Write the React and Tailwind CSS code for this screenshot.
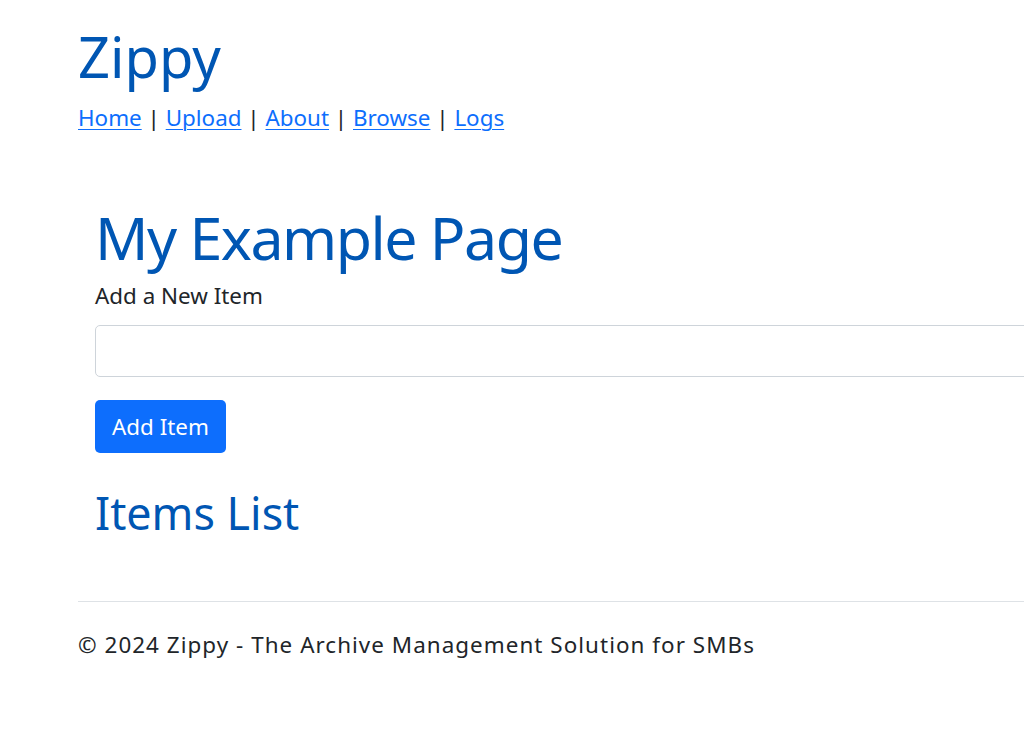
export default function App() {
  const links = ["Home", "Upload", "About", "Browse", "Logs"];
  return (
    <div className="w-[1024px] min-h-[754px] overflow-hidden bg-white text-[#212529] font-['Noto_Sans',sans-serif]">
      <div className="pl-[78px] w-[1300px]">
        <header className="pt-[23px]">
          <h1 className="text-[56px] leading-[1.2] text-[#0056b3] font-normal">Zippy</h1>
          <nav className="mt-[10.5px] text-[22.4px] leading-[1.5]">
            {links.map((l, i) => (
              <span key={l}>
                <a href="#" className="text-[#0d6efd] underline underline-offset-[3px] decoration-1">
                  {l}
                </a>
                {i < links.length - 1 && <span> | </span>}
              </span>
            ))}
          </nav>
        </header>
        <main className="px-[17px] pt-[67.5px]">
          <h2 className="text-[59px] leading-[1.2] tracking-[-1.5px] text-[#0056b3] font-normal">My Example Page</h2>
          <label className="block mt-[6px] text-[22.4px] leading-[1.5]">Add a New Item</label>
          <input
            type="text"
            className="block mt-[13px] w-[1200px] h-[52px] border border-[#ced4da] rounded-[5px] px-[17px] text-[22.4px] outline-none"
          />
          <button className="mt-[23px] h-[53px] px-[17px] bg-[#0d6efd] text-white text-[22.4px] leading-[1.5] rounded-[5px]">
            Add Item
          </button>
          <h3 className="mt-[33px] text-[44.8px] leading-[1.2] text-[#0056b3] font-normal">Items List</h3>
        </main>
        <hr className="mt-[61px] border-0 border-t border-[#dee2e6]" />
        <footer className="pt-[26px] text-[22.4px] leading-[1.5] tracking-[1.05px]">
          © 2024 Zippy - The Archive Management Solution for SMBs
        </footer>
      </div>
    </div>
  );
}
